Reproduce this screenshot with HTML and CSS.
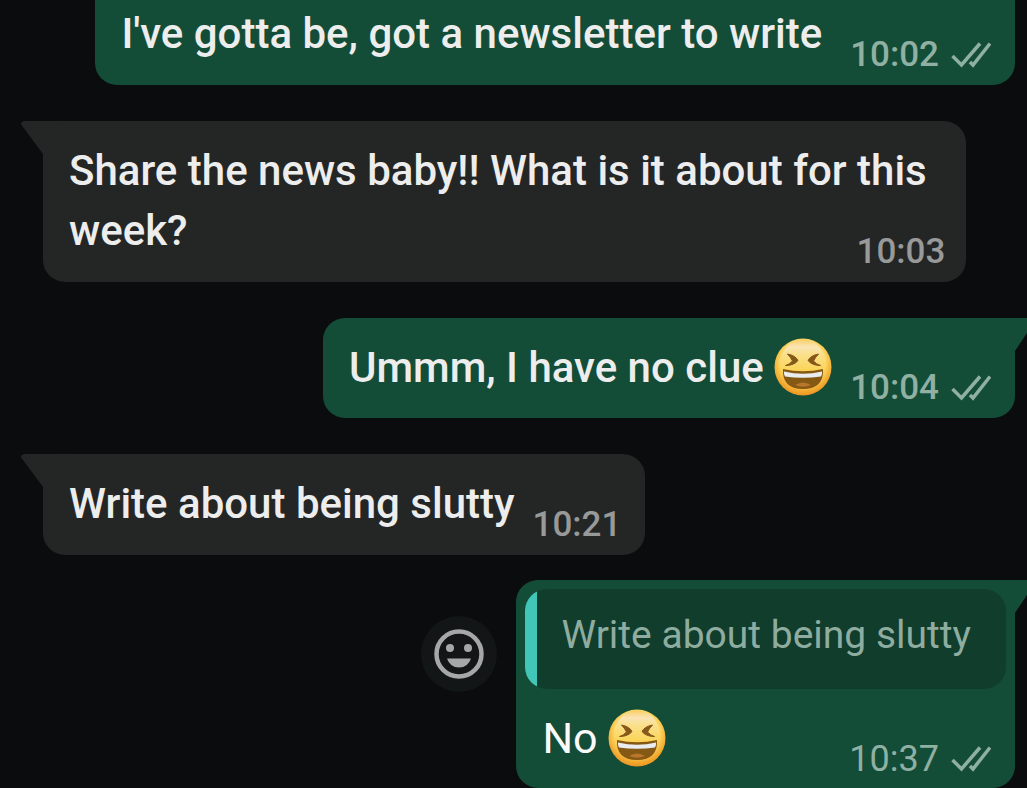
FILE: index.html
```
<!DOCTYPE html>
<html lang="en">
<head>
    <meta charset="UTF-8">
    <meta name="viewport" content="width=device-width, initial-scale=1.0">
    <title>Chat</title>
    <link rel="stylesheet" href="styles.css">
</head>
<body>
    <!-- shared icons -->
    <svg class="sprite" aria-hidden="true">
        <defs>
            <radialGradient id="rim" cx=".5" cy=".4" r=".62">
                <stop offset=".65" stop-color="#fad560"/>
                <stop offset=".85" stop-color="#f2a92f"/>
                <stop offset="1" stop-color="#e98f20"/>
            </radialGradient>
            <linearGradient id="face" x1="0" y1="0" x2="0" y2="1">
                <stop offset="0" stop-color="#f9cf68"/>
                <stop offset=".15" stop-color="#fae4b4"/>
                <stop offset=".3" stop-color="#fae08c"/>
                <stop offset=".6" stop-color="#fad65c"/>
                <stop offset="1" stop-color="#f5ab2c"/>
            </linearGradient>
            <symbol id="laugh" viewBox="0 0 58 58">
                <circle cx="29" cy="29" r="28.5" fill="url(#rim)"/>
                <ellipse cx="29" cy="26" rx="23" ry="24.500" fill="url(#face)"/>
                <path d="M13.500 16q8 1.500 10.500 6.500-4 5-12.500 5 4-1 7-4.500-2-4-5-7z" fill="#85581a" stroke="#85581a" stroke-linejoin="round"/>
                <path d="M44.500 16q-8 1.500-10.500 6.500 4 5 12.500 5-4-1-7-4.500 2-4 5-7z" fill="#85581a" stroke="#85581a" stroke-linejoin="round"/>
                <path d="M9 31q20 4.500 40 0Q50 51 29 51T9 31z" fill="#855813"/>
                <path d="M10 33.500q19 4.500 38 0 .5 3-1 5-18 2.500-36 0-1.500-2-1-5z" fill="#e9edf0"/>
                <path d="M21 47q8-5 16 0-8 3.500-16 0z" fill="#b8762f"/>
            </symbol>
            <symbol id="ticks" viewBox="0 0 40 26">
                <path d="M1.500 14l9 9L29 1.500M19 20l3 3L39 1.500" fill="none" stroke="currentColor" stroke-width="3.500"/>
            </symbol>
        </defs>
    </svg>

    <main class="chat">
        <div class="message out first">
            <p class="text">I've gotta be, got a newsletter to write</p>
            <div class="meta">
                <time>10:02</time>
                <svg class="ticks" role="img" aria-label="Delivered"><use href="#ticks"/></svg>
            </div>
        </div>

        <div class="message in tail long">
            <p class="text">Share the news baby!! What is it about for this week?</p>
            <div class="meta">
                <time>10:03</time>
            </div>
        </div>

        <div class="message out tail">
            <p class="text">Ummm, I have no clue <svg class="emoji" role="img" aria-label="Laughing"><use href="#laugh"/></svg></p>
            <div class="meta">
                <time>10:04</time>
                <svg class="ticks" role="img" aria-label="Delivered"><use href="#ticks"/></svg>
            </div>
        </div>

        <div class="message in tail">
            <p class="text">Write about being slutty</p>
            <div class="meta">
                <time>10:21</time>
            </div>
        </div>

        <div class="row">
            <button class="react" type="button" aria-label="React">
                <svg viewBox="0 0 50 50">
                    <circle cx="25" cy="25" r="22.500" fill="none" stroke="#a6a7a7" stroke-width="4.500"/>
                    <circle cx="16" cy="19" r="4" fill="#a6a7a7"/>
                    <circle cx="34" cy="19" r="4" fill="#a6a7a7"/>
                    <path d="M13 29.500h24q-3 9-12 9t-12-9z" fill="#a6a7a7"/>
                </svg>
            </button>
            <div class="message out tail reply">
                <blockquote class="quote">Write about being slutty</blockquote>
                <div class="line">
                    <p class="text">No <svg class="emoji" role="img" aria-label="Laughing"><use href="#laugh"/></svg></p>
                    <div class="meta">
                        <time>10:37</time>
                        <svg class="ticks" role="img" aria-label="Delivered"><use href="#ticks"/></svg>
                    </div>
                </div>
            </div>
        </div>
    </main>
</body>
</html>
```

FILE: styles.css
```
*{
    padding: 0;
    margin: 0;
    box-sizing: border-box;
}
body{
    background-color: #0a0c0e;
    color: #ededed;
    font-family: Roboto, "Liberation Sans", sans-serif;
    font-size: 42px;
    font-weight: 500;
    line-height: 60px;
    overflow-x: hidden;
}
.sprite{
    display: block;
    width: 0;
    height: 0;
}
.chat{
    display: flex;
    flex-direction: column;
    align-items: flex-start;
    gap: 36px;
    padding: 0 12px 0 43px;
}
.message{
    position: relative;
    display: flex;
    align-items: flex-end;
    gap: 18px;
    padding: 20px 24px 21px 26px;
    border-radius: 22px;
}
.in{
    background-color: #242626;
    color: #ededed;
}
.out{
    align-self: flex-end;
    background-color: #144d37;
}
.first{
    gap: 28px;
    padding-top: 4px;
    border-radius: 0 0 22px 22px;
}

/* time sits beside the end of the last line */
.long{
    display: grid;
    max-width: 95%;
    padding-right: 21px;
}
.long .text,
.long .meta{
    grid-area: 1 / 1;
}
.long .meta{
    align-self: end;
    justify-self: end;
}

/* bubble tails */
.tail::before{
    content: "";
    position: absolute;
    top: 0;
    width: 44px;
    height: 33px;
}
.in.tail{
    border-top-left-radius: 0;
}
.in.tail::before{
    left: -22px;
    background-color: #242626;
    border-top-left-radius: 4px;
    clip-path: polygon(0 0, 100% 0, 50% 100%, 0 10%);
}
.out.tail{
    border-top-right-radius: 0;
}
.out.tail::before{
    right: -22px;
    background-color: #144d37;
    clip-path: polygon(0 0, 100% 0, 50% 100%);
}

.meta{
    display: flex;
    align-items: center;
    gap: 12px;
    height: 40px;
    margin-bottom: -11px;
    color: #989999;
    font-size: 35px;
    line-height: 40px;
}
.out .meta{
    color: #90b0a3;
}
.ticks{
    width: 40px;
    height: 26px;
}
.emoji{
    width: 58px;
    height: 58px;
    vertical-align: -14px;
}
.text:has(.emoji){
    height: 59px;
    line-height: 54px;
    white-space: nowrap;
}

.row{
    align-self: flex-end;
    display: flex;
    align-items: flex-start;
    gap: 19px;
    margin-top: -11px;
}
.react{
    width: 76px;
    height: 76px;
    margin-top: 36px;
    border: 0;
    border-radius: 50%;
    background-color: #121616;
    cursor: pointer;
}
.react svg{
    display: block;
    width: 50px;
    height: 50px;
    margin: 0 auto;
}
.reply{
    flex-direction: column;
    align-items: stretch;
    padding: 9px;
    font-weight: 400;
}
.quote{
    padding: 16px 35px 24px 36px;
    border-radius: 22px;
    background: linear-gradient(to right, #42c6b8 12px, #103d2c 12px);
    color: #8eac9f;
    font-size: 39px;
}
.line{
    display: flex;
    align-items: flex-end;
    justify-content: space-between;
    padding: 2px 15px 11px 17px;
    color: #fafafa;
}
.reply .text{
    font-size: 43px;
}
.reply .meta{
    font-size: 36px;
}
```
